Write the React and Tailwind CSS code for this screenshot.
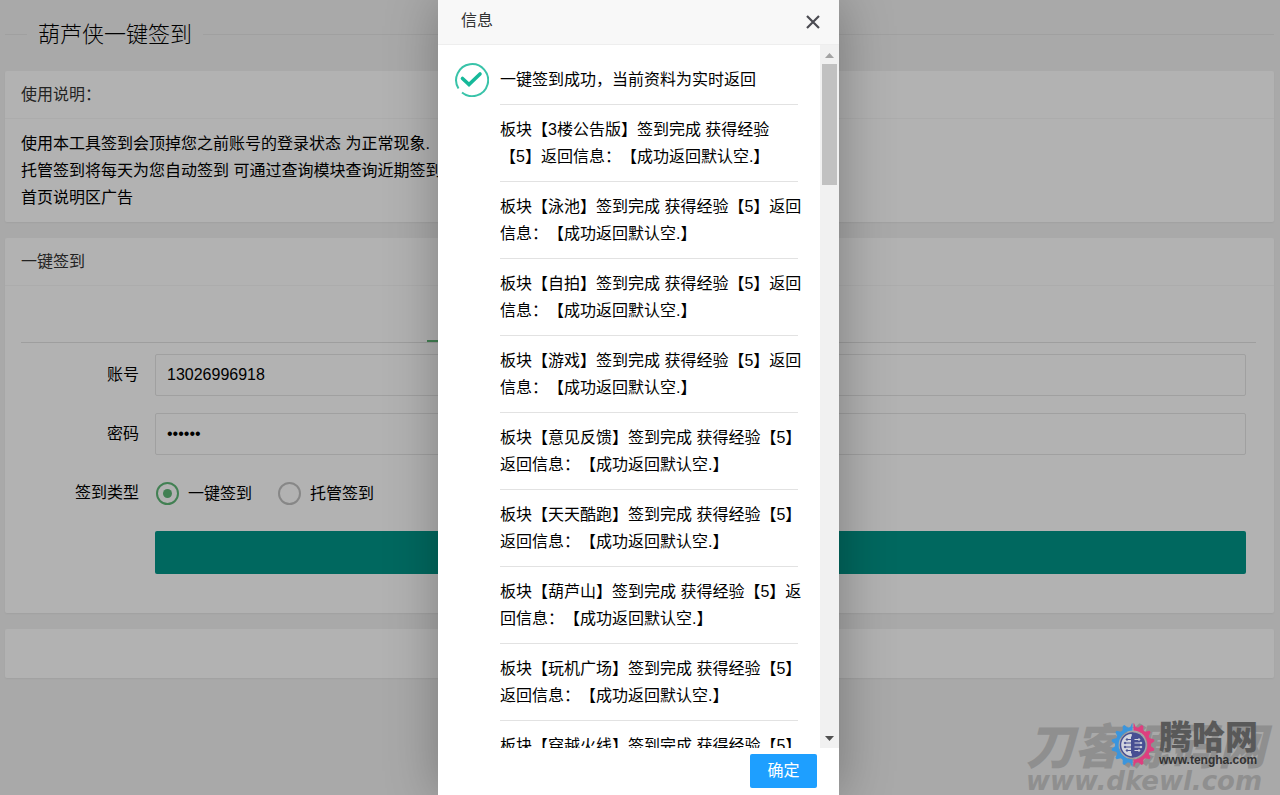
import { useState } from "react";

const boards = [
  "3楼公告版",
  "泳池",
  "自拍",
  "游戏",
  "意见反馈",
  "天天酷跑",
  "葫芦山",
  "玩机广场",
  "穿越火线",
];

const signTypes = [
  { value: "once", label: "一键签到" },
  { value: "hosted", label: "托管签到" },
];

function Card({ title, children }) {
  return (
    <section className="mb-4 rounded-xs bg-white shadow-[0_1px_2px_rgba(0,0,0,0.05)]">
      {title && (
        <h2 className="h-12 border-b border-[#f6f6f6] px-4 leading-[47px] text-[#333]">
          {title}
        </h2>
      )}
      {children}
    </section>
  );
}

function FormRow({ label, htmlFor, children }) {
  return (
    <div className="mb-[17px] flex">
      <label htmlFor={htmlFor} className="w-[134px] shrink-0 pr-4 text-right leading-[42px]">
        {label}
      </label>
      <div className="flex-1">{children}</div>
    </div>
  );
}

function SuccessIcon() {
  return (
    <svg className="h-9 w-9 shrink-0" viewBox="0 0 36 36" fill="none" stroke="#16b99a">
      <path d="M5.5 27.5A16 16 0 1 1 9 31.5" strokeWidth="2" strokeOpacity="0.85" />
      <path d="M9.5 17.5l6.5 6L27 13" strokeWidth="3.6" strokeLinecap="round" />
    </svg>
  );
}

function Gear() {
  const teeth = Array.from({ length: 14 }, (_, i) => (i * 360) / 14);

  return (
    <svg className="h-11 w-11 shrink-0" viewBox="0 0 44 44">
      <defs>
        <clipPath id="gear-left">
          <rect width="21.5" height="44" />
        </clipPath>
        <clipPath id="gear-right">
          <rect x="22.5" width="21.5" height="44" />
        </clipPath>
      </defs>
      {[
        { clip: "url(#gear-left)", color: "#3b95dc" },
        { clip: "url(#gear-right)", color: "#dd3f7f" },
      ].map(({ clip, color }) => (
        <g key={color} clipPath={clip} fill={color}>
          <circle cx="22" cy="22" r="16.2" fill="none" stroke={color} strokeWidth="3.6" />
          {teeth.map((angle) => (
            <path key={angle} d="M18.8 5L21 0.3h2L25.2 5z" transform={`rotate(${angle} 22 22)`} />
          ))}
        </g>
      ))}
      <circle cx="22" cy="22" r="13.8" fill="#a3a3a8" />
      <path d="M21.5 10a12 12 0 0 0 0 24z" fill="#d4d6df" stroke="#474f93" strokeWidth="1.4" />
      <path d="M22 9.5a12.500 12.500 0 0 1 0 25z" fill="#474f93" />
      <g stroke="#474f93" fill="#474f93">
        <path d="M20.500 13.500v17M20.500 16.500h-4M20.500 20h-6M20.500 24h-6M20.500 27.500h-4" strokeWidth="1" />
        <circle cx="16" cy="16.500" r="0.800" />
        <circle cx="14" cy="20" r="0.800" />
        <circle cx="14" cy="24" r="0.800" />
        <circle cx="16" cy="27.500" r="0.800" />
      </g>
      <g stroke="#d4d6df" fill="#d4d6df">
        <path d="M23.500 16.500h4M23.500 20h6M23.500 24h6M23.500 27.500h4" strokeWidth="1" />
        <circle cx="28" cy="16.500" r="0.800" />
        <circle cx="30" cy="20" r="0.800" />
        <circle cx="30" cy="24" r="0.800" />
        <circle cx="28" cy="27.500" r="0.800" />
      </g>
    </svg>
  );
}

function Watermark() {
  return (
    <div className="pointer-events-none absolute right-3 bottom-0 w-[242px] select-none">
      <div className="font-black whitespace-nowrap text-[#8f8f8f] italic">
        <p className="text-[48px] leading-[40px]">刀客源码网</p>
        <p className="font-['DejaVu_Sans',sans-serif] text-[26px] leading-[27px] font-bold">
          www.dkewl.com
        </p>
      </div>
      <div className="absolute bottom-[28px] left-[85px] flex items-center gap-1">
        <Gear />
        <div className="whitespace-nowrap">
          <p className="text-[33px] leading-[30px] font-black text-[#595959]">腾哈网</p>
          <p className="text-[12px] leading-[14px] font-bold text-[#333]">www.tengha.com</p>
        </div>
      </div>
    </div>
  );
}

function ResultDialog({ onClose }) {
  return (
    <div className="absolute inset-0 flex justify-center bg-black/30 pr-[3px]">
      <div
        role="dialog"
        aria-labelledby="dialog-title"
        className="flex h-full w-[401px] flex-col bg-white shadow-[1px_1px_50px_rgba(0,0,0,0.3)]"
      >
        <div className="flex h-[45px] shrink-0 items-center justify-between border-b border-[#eee] bg-[#f8f8f8] pr-[18px] pl-[23px]">
          <h2 id="dialog-title" className="pb-[3px] text-[#333]">信息</h2>
          <button type="button" aria-label="关闭" onClick={onClose}>
            <svg className="h-4 w-4" viewBox="0 0 16 16" stroke="#4b4b52" strokeWidth="2.2">
              <path d="M2 2l12 12M14 2L2 14" />
            </svg>
          </button>
        </div>

        {/* Results list with its scrollbar */}
        <div className="flex min-h-0 flex-1">
          <div className="flex flex-1 items-start gap-[11px] overflow-hidden pt-4 pr-[22px] pl-[15px]">
            <SuccessIcon />
            <div className="flex-1 pt-[5px] leading-[27px]">
              <p>一键签到成功，当前资料为实时返回</p>
              {boards.map((board) => (
                <div key={board} className="mt-[11px] border-t border-[#e2e2e2] pt-[11px]">
                  <p className="-mr-1">
                    {`板块【${board}】签到完成 获得经验【5】返回信息：【成功返回默认空.】`}
                  </p>
                </div>
              ))}
            </div>
          </div>
          <div className="flex w-[19px] flex-col items-center bg-[#f1f1f1]">
            <svg className="h-[19px] w-[9px]" viewBox="0 0 9 19" fill="#a3a3a3">
              <path d="M0 13l4.5-5L9 13z" />
            </svg>
            <div className="h-[121px] w-[15px] bg-[#c1c1c1]" />
            <div className="flex-1" />
            <svg className="h-[19px] w-[9px]" viewBox="0 0 9 19" fill="#505050">
              <path d="M0 7l4.5 5L9 7z" />
            </svg>
          </div>
        </div>

        <div className="flex h-[47px] shrink-0 items-start justify-end pt-[6px] pr-[22px]">
          <button
            type="button"
            onClick={onClose}
            className="h-[34px] w-[67px] rounded-xs bg-[#1e9fff] leading-[32px] text-white"
          >
            确定
          </button>
        </div>
      </div>
    </div>
  );
}

export default function App() {
  const [account, setAccount] = useState("13026996918");
  const [password, setPassword] = useState("123456");
  const [type, setType] = useState("once");
  const [open, setOpen] = useState(true);

  const submit = (e) => {
    e.preventDefault();
    setOpen(true);
  };

  return (
    <div className="relative min-h-screen overflow-hidden bg-[#f2f2f2] font-['Liberation_Sans','Noto_Sans_CJK_SC',sans-serif] text-[16px] text-black [text-spacing-trim:space-all]">
      <main className="pr-[6px] pl-[5px]">
        <div className="flex h-[71px] items-center pb-[2px]">
          <div className="h-px w-[22px] bg-[#e6e6e6]" />
          <h1 className="px-[11px] text-[22px] font-light">葫芦侠一键签到</h1>
          <div className="h-px flex-1 bg-[#e6e6e6]" />
        </div>

        <Card title="使用说明：">
          <div className="px-4 pt-[11px] pb-[11px] leading-[27px]">
            <p>使用本工具签到会顶掉您之前账号的登录状态 为正常现象.</p>
            <p>托管签到将每天为您自动签到 可通过查询模块查询近期签到日</p>
            <p>首页说明区广告</p>
          </div>
        </Card>

        <Card title="一键签到">
          <form onSubmit={submit} className="pr-[18px] pb-[39px] pl-4">
            <div className="mb-[11px] flex h-[57px] items-end justify-center border-b border-[#e2e2e2] pr-6">
              <div className="h-[2px] w-[400px] bg-[#5fb878]" />
            </div>
            <div className="pr-[10px]">
              <FormRow label="账号" htmlFor="account">
                <input
                  id="account"
                  type="text"
                  value={account}
                  onChange={(e) => setAccount(e.target.value)}
                  className="h-[42px] w-full rounded-xs border border-[#e6e6e6] px-[11px] outline-none"
                />
              </FormRow>
              <FormRow label="密码" htmlFor="password">
                <input
                  id="password"
                  type="password"
                  value={password}
                  onChange={(e) => setPassword(e.target.value)}
                  className="h-[42px] w-full rounded-xs border border-[#e6e6e6] px-[11px] outline-none"
                />
              </FormRow>
              <FormRow label="签到类型">
                <div className="flex h-[42px] items-center gap-[26px] pt-px pl-px">
                  {signTypes.map((item) => (
                    <label key={item.value} className="flex items-center gap-[9px]">
                      <input
                        type="radio"
                        name="sign-type"
                        checked={type === item.value}
                        onChange={() => setType(item.value)}
                        className="grid h-[23px] w-[23px] appearance-none place-items-center rounded-full border-2 border-[#c2c2c2] before:h-[9px] before:w-[9px] before:rounded-full checked:border-[#5fb878] checked:before:bg-[#5fb878]"
                      />
                      {item.label}
                    </label>
                  ))}
                </div>
              </FormRow>
              <div className="pl-[134px]">
                <button
                  type="submit"
                  aria-label="一键签到"
                  className="block h-[43px] w-full rounded-xs bg-[#009688]"
                />
              </div>
            </div>
          </form>
        </Card>

        <Card>
          <div className="h-[49px]" />
        </Card>
      </main>

      {open && <ResultDialog onClose={() => setOpen(false)} />}
      <Watermark />
    </div>
  );
}
